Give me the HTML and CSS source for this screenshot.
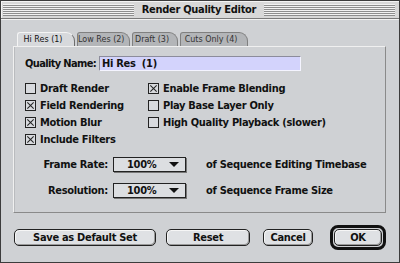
FILE: index.html
```html
<!DOCTYPE html>
<html lang="en">
  <head>
    <meta charset="UTF-8" />
    <title>Render Quality Editor</title>
    <link rel="stylesheet" href="styles.css">
  </head>
  <body>
    <div class="window">
      <div class="titlebar">
        <div class="stripes"></div>
        <div class="title">Render Quality Editor</div>
        <div class="stripes"></div>
      </div>

      <div class="content">
        <div class="tabs">
          <div class="tab active tab-hi">Hi Res (1)</div>
          <div class="tab tab-low">Low Res (2)</div>
          <div class="tab tab-draft">Draft (3)</div>
          <div class="tab tab-cuts">Cuts Only (4)</div>
        </div>

        <div class="panel">
          <div class="name-row">
            <label class="name-label">Quality Name:</label>
            <div class="name-field">Hi Res&nbsp; (1)</div>
          </div>

          <div class="options">
            <div class="option"><span class="box"></span>Draft Render</div>
            <div class="option"><span class="box checked"></span>Enable Frame Blending</div>
            <div class="option"><span class="box checked"></span>Field Rendering</div>
            <div class="option"><span class="box"></span>Play Base Layer Only</div>
            <div class="option"><span class="box checked"></span>Motion Blur</div>
            <div class="option"><span class="box"></span>High Quality Playback (slower)</div>
            <div class="option"><span class="box checked"></span>Include Filters</div>
          </div>

          <div class="popup-row first">
            <span class="popup-label">Frame Rate:</span>
            <div class="popup"><span>100%</span><span class="arrow"></span></div>
            <span class="popup-note">of Sequence Editing Timebase</span>
          </div>
          <div class="popup-row">
            <span class="popup-label">Resolution:</span>
            <div class="popup"><span>100%</span><span class="arrow"></span></div>
            <span class="popup-note">of Sequence Frame Size</span>
          </div>
        </div>

        <div class="buttons">
          <button class="btn btn-save">Save as Default Set</button>
          <button class="btn btn-reset">Reset</button>
          <button class="btn btn-cancel">Cancel</button>
          <div class="default-ring">
            <button class="btn btn-ok">OK</button>
          </div>
        </div>
      </div>
    </div>
  </body>
</html>
```

FILE: styles.css
```css
body {
  margin: 0;
  font-family: "DejaVu Sans Condensed", "DejaVu Sans", sans-serif;
  font-weight: bold;
  font-size: 11px;
  letter-spacing: -0.3px;
  color: #111;
}

.window {
  width: 400px;
  height: 263px;
  box-sizing: border-box;
  border: 1px solid #3c3c3c;
  background: #cfd1d4;
  display: flex;
  flex-direction: column;
}

.titlebar {
  height: 17px;
  display: flex;
  align-items: center;
  gap: 6px;
  padding: 0 4px 0 2px;
  background: #d8d8d8;
  border-bottom: 1px solid #7a7a7a;
  box-shadow: inset 1px 1px 0 #f4f4f4;
}

.stripes {
  flex: 1;
  height: 12px;
  background: repeating-linear-gradient(to bottom, #f2f2f2 0 1px, #8e8e8e 1px 2px);
}

.title {
  font-size: 11px;
  padding: 0 2px;
  white-space: nowrap;
}

.content {
  flex: 1;
  padding: 12px 13px 0 12px;
  border-top: 1px solid #f2f2f2;
}

.tabs {
  display: flex;
  height: 14px;
  padding-left: 4px;
  gap: 2px;
}

.tab {
  font-family: "DejaVu Sans", sans-serif;
  font-weight: normal;
  font-size: 8px;
  letter-spacing: 0;
  line-height: 13px;
  padding: 0 6px 0 0;
  text-align: center;
  white-space: nowrap;
  background: #b3b5b8;
  color: #333;
  border: 1px solid #808080;
  border-bottom: none;
  border-radius: 3px 9px 0 0;
}

.tab.active {
  background: #d7d9dc;
  color: #111;
  border-color: #f4f4f4 #6e6e6e #6e6e6e #f4f4f4;
}

.tab-hi {
  width: 50px;
}

.tab-low {
  width: 45px;
}

.tab-draft {
  width: 38px;
}

.tab-cuts {
  width: 60px;
}

.panel {
  height: 167px;
  box-sizing: border-box;
  padding: 9px 11px 0 11px;
  border: 1px solid;
  border-color: #f0f0f0 #8a8a8a #8a8a8a #f0f0f0;
  box-shadow: inset 1px 0 0 #b9bbbe;
}

.name-row {
  display: flex;
  align-items: center;
  gap: 3px;
  height: 15px;
}

.name-label {
  white-space: nowrap;
  letter-spacing: -0.65px;
}

.name-field {
  width: 198px;
  height: 13px;
  line-height: 13px;
  padding-left: 2px;
  background: #d3d3fc;
  border: 1px solid;
  border-color: #8c8c9c #f4f4ff #f4f4ff #8c8c9c;
}

.options {
  display: grid;
  grid-template-columns: 123px auto;
  grid-auto-rows: 17px;
  margin-top: 9px;
}

.option {
  display: flex;
  align-items: center;
  gap: 4px;
  white-space: nowrap;
}

.box {
  width: 9px;
  height: 9px;
  border: 1px solid #222;
  background: #d8dade;
  position: relative;
}

.box.checked::before,
.box.checked::after {
  content: "";
  position: absolute;
  left: 0;
  top: 4px;
  width: 9px;
  height: 1px;
  background: #222;
  transform: rotate(45deg);
}

.box.checked::after {
  transform: rotate(-45deg);
}

.popup-row {
  display: flex;
  align-items: center;
  height: 16px;
  margin-top: 10px;
  white-space: nowrap;
}

.popup-row.first {
  margin-top: 8px;
}

.popup-label {
  flex-shrink: 0;
  width: 83px;
  text-align: right;
  margin-right: 5px;
}

.popup {
  flex-shrink: 0;
  width: 52px;
  height: 13px;
  display: flex;
  align-items: center;
  justify-content: space-between;
  padding: 0 6px 0 13px;
  background: #dcdee1;
  border: 1px solid #222;
  box-shadow: 1px 1px 0 #777;
  margin-right: 20px;
}

.arrow {
  width: 0;
  height: 0;
  border-left: 5px solid transparent;
  border-right: 5px solid transparent;
  border-top: 5px solid #111;
}

.buttons {
  display: flex;
  align-items: center;
  height: 25px;
  margin-top: 12px;
  padding-left: 1px;
}

.btn {
  height: 17px;
  padding: 0;
  font-family: inherit;
  font-weight: bold;
  font-size: 11px;
  letter-spacing: -0.3px;
  color: #111;
  background: #dfe1e4;
  border: 1px solid #222;
  border-radius: 5px;
  box-shadow: inset -1px -1px 0 #9a9a9a, inset 1px 1px 0 #f6f6f6;
}

.btn-save {
  width: 142px;
  margin-right: 10px;
}

.btn-reset {
  width: 84px;
  margin-right: 13px;
}

.btn-cancel {
  width: 50px;
  margin-right: 17px;
}

.default-ring {
  display: flex;
  padding: 1px;
  border: 3px solid #111;
  border-radius: 8px;
}

.btn-ok {
  width: 48px;
}
```
